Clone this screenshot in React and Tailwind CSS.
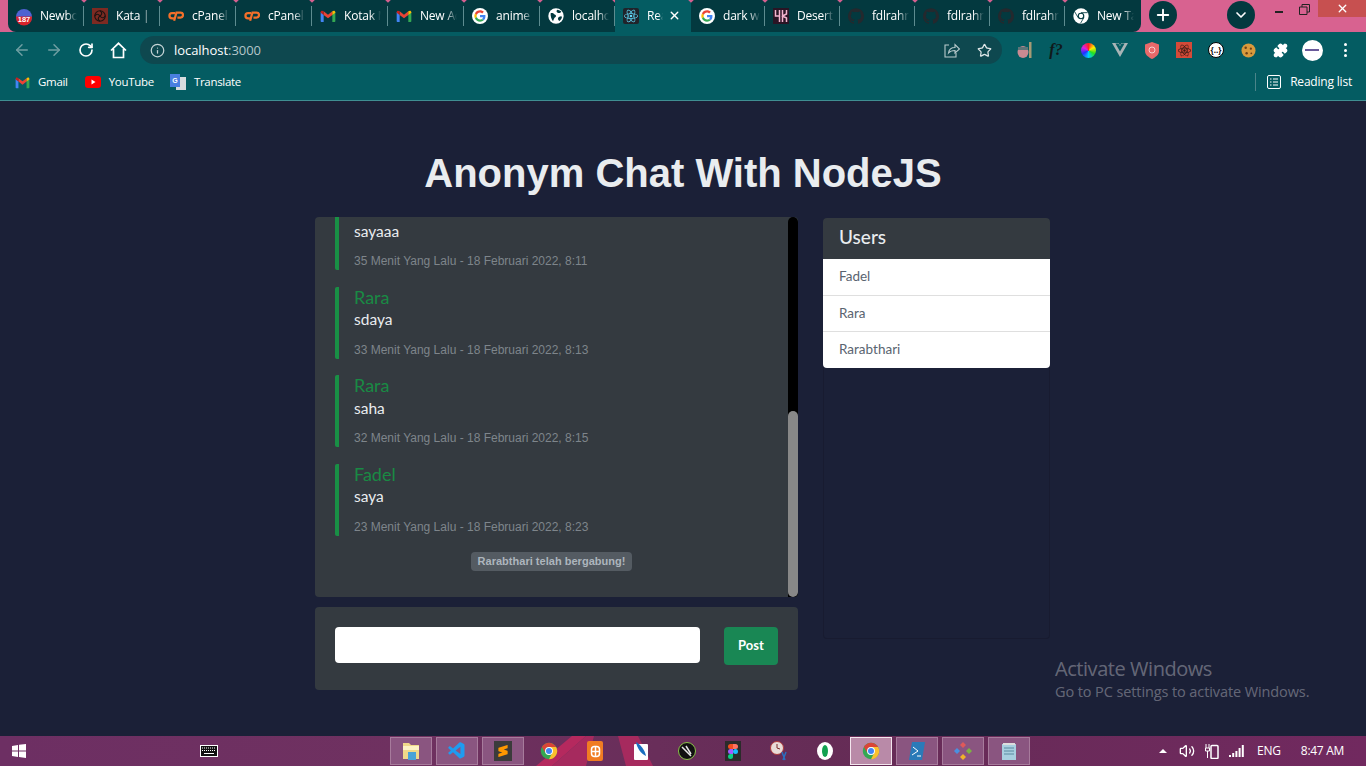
import React from "react";
import { ArrowLeft, ArrowRight, RotateCw, Info, Star, Puzzle, Plus, ChevronDown, X, Volume2 } from "lucide-react";
import { SiGithub, SiReact, SiVuedotjs, SiSublimetext } from "react-icons/si";
import { VscVscode } from "react-icons/vsc";

const G = ({ s = 16 }) => (
  <svg width={s} height={s} viewBox="0 0 48 48">
    <circle cx="24" cy="24" r="24" fill="#fff" />
    <g transform="translate(7 7) scale(.71)">
      <path fill="#EA4335" d="M24 9.5c3.5 0 6.700 1.300 9.100 3.500l6.800-6.800C35.800 2.400 30.300 0 24 0 14.600 0 6.500 5.400 2.600 13.200l7.900 6.200C12.400 13.600 17.700 9.500 24 9.500z" />
      <path fill="#4285F4" d="M46.900 24.500c0-1.600-.1-3.100-.4-4.500H24v9h12.900c-.6 3-2.200 5.500-4.700 7.200l7.700 6c4.500-4.200 7-10.300 7-17.700z" />
      <path fill="#FBBC05" d="M10.500 28.600c-.5-1.400-.8-3-.8-4.600s.3-3.200.8-4.600l-7.900-6.200C.9 16.500 0 20.100 0 24s.9 7.500 2.600 10.800l7.900-6.200z" />
      <path fill="#34A853" d="M24 48c6.500 0 11.900-2.100 15.900-5.800l-7.700-6c-2.200 1.400-4.900 2.300-8.200 2.300-6.300 0-11.600-4.200-13.500-9.900l-7.900 6.200C6.500 42.600 14.600 48 24 48z" />
    </g>
  </svg>
);

const Gmail = ({ s = 16 }) => (
  <svg width={s} height={s} viewBox="0 0 24 24">
    <path fill="#4285F4" d="M1 6v14c0 .6.500 1 1 1h3.500V10z" />
    <path fill="#34A853" d="M23 6v14c0 .6-.500 1-1 1h-3.500V10z" />
    <path fill="#EA4335" d="M5.500 5 12 10l6.500-5v5.500L12 15.500l-6.500-5z" />
    <path fill="#C5221F" d="M1 6.500C1 4 3.500 3.500 5.500 5v5.500L1 7z" />
    <path fill="#FBBC04" d="M23 6.500C23 4 20.500 3.500 18.500 5v5.500L23 7z" />
  </svg>
);

const Chrome = ({ s = 20 }) => (
  <svg width={s} height={s} viewBox="0 0 48 48">
    <circle cx="24" cy="24" r="22" fill="#34A853" />
    <path fill="#FBC02D" d="M24 46A22 22 0 0 0 43 13H24l9 15z" />
    <path fill="#DB4437" d="M5 13a22 22 0 0 1 38 0H24c-5 0-8 3-9 6l-1 9z" />
    <circle cx="24" cy="24" r="10.500" fill="#fff" />
    <circle cx="24" cy="24" r="8" fill="#4285F4" />
  </svg>
);

const ChromeMono = ({ s = 16 }) => (
  <svg width={s} height={s} viewBox="0 0 48 48">
    <circle cx="24" cy="24" r="23" fill="#fff" />
    <circle cx="24" cy="24" r="10" fill="#03393f" />
    <circle cx="24" cy="24" r="6.500" fill="#fff" />
    <path d="M24 14h20M15.500 29 5.500 12M32.500 29 22.500 46" stroke="#03393f" strokeWidth="2.500" />
  </svg>
);

const Globe = () => (
  <svg width="16" height="16" viewBox="0 0 24 24">
    <circle cx="12" cy="12" r="11.500" fill="#fff" />
    <path fill="#03393f" d="M4 8c2-1 4 0 5 1s3 1 3 3-2 2-3 4-1 3-1.500 4C5 17 3.500 12 4 8zM14 2.500c2 0 5 1.500 6 3-1 1-2 2-3.500 2s-3-1-3.500-2 0-2 1-3zM17 13c2-1 3-1 4 0-.5 3-2 5-4 6.500-1-1-2-2-2-3.500s1-2.500 2-3z" />
  </svg>
);

const Newbo = () => (
  <svg width="16" height="18" viewBox="0 0 16 18" className="mt-[1px]">
    <circle cx="8" cy="9" r="8" fill="#4f63d2" />
    <path d="M0 9.500a8 8 0 0 0 16 0v-1H0z" fill="#d8232a" />
    <text x="8" y="14" textAnchor="middle" fontSize="7.500" fontWeight="700" fill="#fff" fontFamily="Liberation Sans">187</text>
  </svg>
);

const Kata = () => (
  <div className="w-4 h-4 bg-[#7d2a22] flex items-center justify-center">
    <svg width="14" height="14" viewBox="0 0 24 24" fill="none" stroke="#1d1412" strokeWidth="2">
      <circle cx="12" cy="12" r="9" />
      <path d="M12 3c4 3 4 6 0 9s-4 6 0 9M3 12c3-4 6-4 9 0s6 4 9 0" />
    </svg>
  </div>
);

const Desert = () => (
  <div className="w-4 h-4 bg-[#2a1424] flex items-center justify-center">
    <svg width="14" height="14" viewBox="0 0 14 14" fill="none" stroke="#f4b5cf" strokeWidth="1.500">
      <path d="M1.500 1v6h4M5.500 1v12M8.500 1v12M12.500 1v4l-4 2 4 2v4" />
    </svg>
  </div>
);

const Cp = () => (
  <svg width="17" height="12" viewBox="0 0 17 12" fill="none" stroke="#f4702a" strokeWidth="2.400">
    <path d="M7.500 3H4.300a2.700 2.700 0 0 0 0 5.500h2" />
    <path d="M6.500 11 9 2.300h4.300a2.600 2.600 0 0 1 0 5.300H10" />
  </svg>
);
const Gh = () => <SiGithub size={16} color="#24292e" />;
const ReactFav = () => (
  <div className="w-4 h-4 bg-[#20232a] rounded-[2px] flex items-center justify-center">
    <SiReact size={14} color="#61dafb" />
  </div>
);

const Figma = () => (
  <svg width="10" height="15" viewBox="0 0 10 15">
    <path d="M2.500 0H5v5H2.500a2.500 2.500 0 0 1 0-5z" fill="#f24e1e" />
    <path d="M5 0h2.500a2.500 2.500 0 0 1 0 5H5z" fill="#ff7262" />
    <path d="M2.500 5H5v5H2.500a2.500 2.500 0 0 1 0-5z" fill="#a259ff" />
    <circle cx="7.500" cy="7.500" r="2.500" fill="#1abcfe" />
    <path d="M2.500 10H5v2.500a2.500 2.500 0 1 1-2.500-2.500z" fill="#0acf83" />
  </svg>
);

const tabs = [
  { w: "w-[76px]", icon: <Newbo />, t: "Newbook" },
  { w: "w-[76px]", icon: <Kata />, t: "Kata | Chat" },
  { w: "w-[76px]", icon: <Cp />, t: "cPanel - Tools" },
  { w: "w-[76px]", icon: <Cp />, t: "cPanel - Tools" },
  { w: "w-[76px]", icon: <Gmail />, t: "Kotak Masuk" },
  { w: "w-[76px]", icon: <Gmail />, t: "New Account" },
  { w: "w-[76px]", icon: <G />, t: "anime list" },
  { w: "w-[75px]", icon: <Globe />, t: "localhost" },
  { w: "w-[76px]", icon: <ReactFav />, t: "React App", active: true },
  { w: "w-[74px]", icon: <G />, t: "dark web" },
  { w: "w-[75px]", icon: <Desert />, t: "Desert Song" },
  { w: "w-[75px]", icon: <Gh />, t: "fdlrahman" },
  { w: "w-[75px]", icon: <Gh />, t: "fdlrahman" },
  { w: "w-[75px]", icon: <Gh />, t: "fdlrahman" },
  { w: "w-[75px]", icon: <ChromeMono />, t: "New Tab" },
];

function Tab({ tab, last }) {
  return (
    <div className={`${tab.w} relative h-8 flex items-center pl-2 shrink-0 ${tab.active ? "bg-[#045c62]" : ""}`}>
      <div className="w-4 h-4 flex items-center justify-center shrink-0">{tab.icon}</div>
      <div className={`ml-2 overflow-hidden whitespace-nowrap text-white text-[12px] leading-4 tracking-[-0.2px] [mask-image:linear-gradient(to_right,black_70%,transparent)] ${tab.active ? "w-[16px]" : "w-[37px]"}`}>
        {tab.t}
      </div>
      {tab.active && <X size={13} strokeWidth={2.5} className="absolute right-[10px] top-[9px] text-white" />}
      {!tab.active && !last && <div className="absolute right-0 top-[6px] h-5 w-px bg-[#5d8c90]" />}
      {!last && <div className="absolute -right-[1.5px] -top-[2px] w-1 h-1 rotate-45 bg-[#d76090]" />}
    </div>
  );
}

function TabStrip() {
  return (
    <div className="h-8 flex bg-[#d86290] shrink-0">
      <div className="ml-2 flex bg-[#03393f] rounded-bl-lg rounded-br-lg pr-[1px]">
        {tabs.map((t, i) => <Tab key={i} tab={t} last={i === tabs.length - 1} />)}
      </div>
      <div className="ml-2 mt-[1px] w-7 h-7 rounded-full bg-[#03393f] flex items-center justify-center">
        <Plus size={18} strokeWidth={2.5} className="text-white" />
      </div>
      <div className="ml-[50px] mt-[1px] w-7 h-7 rounded-full bg-[#03393f] flex items-center justify-center">
        <ChevronDown size={16} strokeWidth={2.5} className="text-white" />
      </div>
      <div className="ml-auto flex h-[17px]">
        <div className="w-[26px] flex items-center justify-center pt-[3px]"><div className="w-2 h-[2px] bg-[#222] mt-[4px]" /></div>
        <div className="w-[26px] flex items-center justify-center pr-[2px]">
          <svg width="11" height="11" viewBox="0 0 11 11" fill="none" stroke="#222" className="mt-[1px]"><path d="M.5 3h7.500v7.500H.5zM3 3V.5h7.500V8H8" /></svg>
        </div>
        <div className="w-[48px] bg-[#c75050] flex items-center justify-center">
          <X size={13} strokeWidth={2.5} className="text-white" />
        </div>
      </div>
    </div>
  );
}

const Ext = ({ children, w = "w-8" }) => <div className={`${w} h-8 flex items-center justify-center shrink-0`}>{children}</div>;

function Toolbar() {
  return (
    <div className="h-9 flex items-center bg-[#045c62] pl-[6px] shrink-0">
      <Ext><ArrowLeft size={18} className="text-[#6f9ea2]" /></Ext>
      <Ext><ArrowRight size={18} className="text-[#6f9ea2]" /></Ext>
      <Ext><RotateCw size={16} strokeWidth={2.5} className="text-white" /></Ext>
      <Ext>
        <svg width="17" height="17" viewBox="0 0 17 17" fill="none" stroke="#fff" strokeWidth="1.700" strokeLinejoin="miter"><path d="M1 8.500 8.500 1.300 16 8.500M3.500 7v8.500h10V7" /></svg>
      </Ext>
      <div className="ml-[6px] w-[862px] h-7 rounded-full bg-[#0e484f] flex items-center pl-[10px] pr-[2px] shrink-0">
        <Info size={15} className="text-[#c5d4d6]" />
        <span className="ml-[9px] mt-[2px] text-[13px] text-white font-['Open_Sans'] tracking-[-0.05px]">localhost<span className="text-[#b3c6c9]">:3000</span></span>
        <div className="ml-auto flex">
          <Ext>
            <svg width="16" height="15" viewBox="0 0 16 15" fill="none" stroke="#b9cbcd" strokeWidth="1.100"><path d="M5 2H1v12h11v-4" /><path d="M4.500 10c.5-3.500 3-5.500 6.500-5.500V1.500l4.500 4.500L11 10V7.500c-2.500 0-5 .8-6.500 2.500z" /></svg>
          </Ext>
          <Ext><Star size={15} className="text-[#dfe7e8]" /></Ext>
        </div>
      </div>
      <div className="ml-[6px] flex">
        <Ext>
          <svg width="16" height="18" viewBox="0 0 16 18"><ellipse cx="7" cy="11" rx="5.500" ry="6" fill="#c98a92" /><path d="M2 6h10v3H2z" fill="#5e7478" /><rect x="13" y="1" width="2.500" height="16" fill="#a59a74" /></svg>
        </Ext>
        <Ext><span className="font-['Liberation_Serif'] italic font-bold text-[16px] text-[#10191a]">f?</span></Ext>
        <Ext><div className="w-[15px] h-[15px] rounded-full bg-[conic-gradient(#ff2020,#ffee00,#20e020,#00d0ff,#2030ff,#e020e0,#ff2020)]" /></Ext>
        <Ext><SiVuedotjs size={16} color="#a9b4b6" /></Ext>
        <Ext>
          <svg width="16" height="17" viewBox="0 0 16 17"><path d="M8 0l7 2.500V9c0 4-4 6.500-7 8-3-1.500-7-4-7-8V2.500z" fill="#e8696a" /><circle cx="8" cy="8" r="3" fill="none" stroke="#f7d0d0" /></svg>
        </Ext>
        <Ext><div className="w-4 h-4 bg-[#d64a38] flex items-center justify-center"><SiReact size={13} color="#3a1a14" /></div></Ext>
        <Ext><div className="w-4 h-4 rounded-full bg-white border border-black flex items-center justify-center text-[8px] leading-none font-bold text-black">{"{..}"}</div></Ext>
        <Ext>
          <svg width="15" height="15" viewBox="0 0 16 16"><circle cx="8" cy="8" r="7.500" fill="#d99a3c" /><circle cx="5" cy="5" r="1.300" fill="#6e4016" /><circle cx="10.500" cy="6" r="1.200" fill="#6e4016" /><circle cx="6" cy="11" r="1.300" fill="#6e4016" /><circle cx="11" cy="11" r="1" fill="#6e4016" /></svg>
        </Ext>
        <Ext><Puzzle size={15} fill="#fff" className="text-white" /></Ext>
        <Ext>
          <div className="w-[21px] h-[21px] rounded-full bg-white flex items-center justify-center">
            <div className="w-[14px] h-[2px] bg-[#6a5a9a]" />
          </div>
        </Ext>
        <Ext w="w-[34px]">
          <div className="flex flex-col gap-[2.5px]">
            <div className="w-[3px] h-[3px] rounded-full bg-white" />
            <div className="w-[3px] h-[3px] rounded-full bg-white" />
            <div className="w-[3px] h-[3px] rounded-full bg-white" />
          </div>
        </Ext>
      </div>
    </div>
  );
}

function Bookmarks() {
  return (
    <div className="h-[33px] flex items-center bg-[#045c62] border-b border-[#3f8e92] text-white text-[12px] font-['Open_Sans'] pb-[4px] pl-[15px] shrink-0">
      <Gmail s={15} />
      <span className="ml-2 text-[11.5px] tracking-[-0.3px]">Gmail</span>
      <svg width="16" height="12" viewBox="0 0 16 12" className="ml-[17px]"><rect width="16" height="12" rx="3" fill="#f00" /><path d="M6.500 3.500v5l4-2.500z" fill="#fff" /></svg>
      <span className="ml-2 text-[11.5px] tracking-[-0.3px]">YouTube</span>
      <svg width="16" height="17" viewBox="0 0 16 17" className="ml-4"><rect x="6" y="3" width="10" height="13" fill="#d8dcde" /><path d="M0 0h10v13H0z" fill="#4a7fe0" /><text x="5" y="9" textAnchor="middle" fontSize="7" fontWeight="700" fill="#fff" fontFamily="Liberation Sans">G</text></svg>
      <span className="ml-2 text-[11.5px] tracking-[-0.3px]">Translate</span>
      <div className="ml-auto h-[18px] w-px bg-[#4b8489]" />
      <svg width="14" height="14" viewBox="0 0 14 14" fill="none" stroke="#fff" className="ml-[11px]"><rect x=".5" y=".5" width="13" height="13" rx="1.500" /><path d="M3 4h1.500M6 4h5M3 7h1.500M6 7h5M3 10h1.500M6 10h5" /></svg>
      <span className="ml-[9px] mr-[14px] tracking-[-0.2px]">Reading list</span>
    </div>
  );
}

const messages = [
  { n: "Fadel", b: "sayaaa", t: "35 Menit Yang Lalu - 18 Februari 2022, 8:11" },
  { n: "Rara", b: "sdaya", t: "33 Menit Yang Lalu - 18 Februari 2022, 8:13" },
  { n: "Rara", b: "saha", t: "32 Menit Yang Lalu - 18 Februari 2022, 8:15" },
  { n: "Fadel", b: "saya", t: "23 Menit Yang Lalu - 18 Februari 2022, 8:23" },
];

function Message({ m }) {
  return (
    <div className="h-[72px] shrink-0 border-l-4 border-[#198f45] rounded-l-[2px] pl-[15px] flex flex-col font-['Lato']">
      <div className="h-5 text-[18px] leading-5 text-[#198a44]">{m.n}</div>
      <div className="mt-[0.5px] h-[24px] text-[15.5px] leading-[24px] text-[#e9ecef]">{m.b}</div>
      <div className="mt-[10.5px] h-4 text-[12px] leading-4 text-[#7e858b] font-['Liberation_Sans']">{m.t}</div>
    </div>
  );
}

function Main() {
  return (
    <main className="flex-1 min-h-0 flex flex-col items-center bg-[#1b2037] relative">
      <h1 className="mt-[48px] h-[48px] text-[40px] leading-[48px] font-bold text-[#e9ecef] font-['Liberation_Sans']">Anonym Chat With NodeJS</h1>
      <div className="mt-[20px] w-[736px] flex gap-[25px] items-start">
        <div className="w-[483px] flex flex-col gap-[10px]">
          <div className="h-[380px] flex bg-[#343a40] rounded-[4px] overflow-hidden">
            <div className="flex-1 min-w-0 flex flex-col justify-end gap-[16.5px] pl-5 pb-[26px]">
              {messages.map((m, i) => <Message key={i} m={m} />)}
              <div className="self-center ml-[-20px] h-[19px] px-[7px] rounded-[4px] bg-[#545b62] text-[#adb5bd] text-[11px] leading-[19px] font-bold tracking-[0.02px] font-['Liberation_Sans']">Rarabthari telah bergabung!</div>
            </div>
            <div className="w-[10px] shrink-0 flex flex-col bg-black rounded-t-[5px]">
              <div className="h-[194px]" />
              <div className="flex-1 rounded-[5px] bg-[#888]" />
            </div>
          </div>
          <div className="h-[83px] bg-[#343a40] rounded-[4px] flex items-start pl-5 pr-5 pt-5">
            <div className="w-[365px] h-9 rounded-[4px] bg-white" />
            <button className="ml-auto w-[54px] h-[38px] rounded-[4px] bg-[#198754] text-white text-[13px] font-bold font-['Lato']">Post</button>
          </div>
        </div>
        <div className="w-[227px] h-[421px] mt-[1px] rounded-[4px] border border-[#181b30] border-t-0 flex flex-col font-['Lato']">
          <div className="h-[41px] -mx-px rounded-t-[4px] bg-[#343a40] flex items-center pl-4 pb-[3px] text-[19px] font-medium text-[#e9ecef]">Users</div>
          <div className="-mx-px bg-white rounded-b-[4px] text-[13.5px] text-[#5a6470]">
            <div className="h-[37px] pl-4 pb-[2px] flex items-center border-b border-[#dfdfdf]">Fadel</div>
            <div className="h-[36px] pl-4 flex items-center border-b border-[#dfdfdf]">Rara</div>
            <div className="h-[36px] pl-4 pb-[1px] flex items-center">Rarabthari</div>
          </div>
        </div>
      </div>
      <div className="absolute left-[1055px] top-[556px] text-[#ffffff55] font-['Open_Sans']">
        <div className="text-[20px] leading-[24px] tracking-[-0.45px]">Activate Windows</div>
        <div className="text-[14.5px] leading-[22px] tracking-[-0.1px]">Go to PC settings to activate Windows.</div>
      </div>
    </main>
  );
}

const TaskBtn = ({ children, on, active }) => (
  <div className={`w-[42px] h-[28px] shrink-0 flex items-center justify-center border ${active ? "border-[#f3e6ee] bg-[#b98aa8]" : on ? "border-[#a77b9c] bg-[#8a5580]" : "border-transparent"}`}>
    {children}
  </div>
);

function Taskbar() {
  return (
    <footer className="h-[30px] shrink-0 relative flex items-center bg-[linear-gradient(90deg,#6d2f63_0%,#6f3160_30%,#652c56_60%,#71295f_100%)] text-white overflow-hidden">
      <svg className="absolute left-[530px] top-0 pointer-events-none" width="130" height="30" viewBox="0 0 130 30">
        <path d="M6 30 42 0h14L22 30z" fill="#b5295e" />
        <path d="M22 30 56 0h8l-8 30z" fill="#a62a5e" />
        <path d="M88 0h20l15 30H96z" fill="#a62a5e" />
      </svg>
      <svg width="14" height="14" viewBox="0 0 14 14" fill="#fff" className="ml-[12px] relative"><path d="M0 2l6-1v5.500H0zM7 .8 14 0v6.500H7zM0 7.500h6V13l-6-1zM7 7.500h7V14l-7-1z" /></svg>
      <svg width="18" height="12" viewBox="0 0 18 12" className="ml-[174px] relative"><rect x=".5" y=".5" width="17" height="11" fill="#111" stroke="#fff" /><path d="M2 3h14M2 5.500h14" stroke="#fff" strokeDasharray="1 1" /><path d="M4 8.500h10" stroke="#fff" /></svg>
      <div className="ml-[172px] flex gap-1 relative">
        <TaskBtn on>
          <svg width="18" height="20" viewBox="0 0 18 20"><path d="M1 2h6l2 2h8v14H1z" fill="#f0d98a" /><path d="M1 5h16v4H1z" fill="#fdf3c4" /><rect x="6" y="11" width="8" height="8" fill="#4aa3d8" /></svg>
        </TaskBtn>
        <TaskBtn on><VscVscode size={20} color="#1f9cf0" /></TaskBtn>
        <TaskBtn on><div className="w-[18px] h-[20px] bg-[#3b3b3b] flex items-center justify-center"><SiSublimetext size={12} color="#ff9800" /></div></TaskBtn>
        <TaskBtn><Chrome s={18} /></TaskBtn>
        <TaskBtn>
          <div className="w-[16px] h-[20px] bg-[#f07c22] rounded-[2px] flex items-center justify-center">
            <svg width="11" height="13" viewBox="0 0 11 13" fill="none" stroke="#fff" strokeWidth="1.500"><rect x="1.500" y="1.500" width="8" height="10" rx="3" /><path d="M1 6.500h9M5.500 1v11" /></svg>
          </div>
        </TaskBtn>
        <TaskBtn>
          <svg width="14" height="18" viewBox="0 0 14 18"><rect y="2" width="14" height="16" rx="1" fill="#fff" /><path d="M2 0c4 2 9 8 10 14C7 12 3 6 2 0z" fill="#1a6fc0" /></svg>
        </TaskBtn>
        <TaskBtn>
          <svg width="18" height="18" viewBox="0 0 18 18"><circle cx="9" cy="9" r="8.500" fill="#101010" stroke="#8bc34a" strokeWidth="1" /><path d="M4 5l9 9M8 4l5 8" stroke="#e6e6e6" strokeWidth="1.500" /></svg>
        </TaskBtn>
        <TaskBtn><div className="w-[16px] h-[20px] bg-[#2b2b2b] flex items-center justify-center"><Figma /></div></TaskBtn>
        <TaskBtn>
          <svg width="20" height="20" viewBox="0 0 20 20"><circle cx="8" cy="7" r="6.500" fill="#e8dcd8" stroke="#b03a3a" /><path d="M8 3v4l3 1" stroke="#7a2a2a" fill="none" /><path d="M13 11l3 8M17 11l-3 8" stroke="#2a70c0" strokeWidth="1.500" /></svg>
        </TaskBtn>
        <TaskBtn>
          <svg width="16" height="18" viewBox="0 0 16 18"><ellipse cx="8" cy="9" rx="8" ry="9" fill="#fff" /><ellipse cx="8" cy="9" rx="3" ry="6" fill="#12a150" /></svg>
        </TaskBtn>
        <TaskBtn active><Chrome s={18} /></TaskBtn>
        <TaskBtn on>
          <svg width="16" height="18" viewBox="0 0 16 18"><path d="M3 0h13l-3 18H0z" fill="#2a7ab8" /><path d="M4 5l5 4-6 4M8 14h4" stroke="#fff" fill="none" /></svg>
        </TaskBtn>
        <TaskBtn on>
          <svg width="18" height="18" viewBox="0 0 18 18"><path d="M9 0l3 3-3 3-3-3z" fill="#e0595a" /><path d="M3 6l3 3-3 3-3-3z" fill="#4a90e0" /><path d="M15 6l3 3-3 3-3-3z" fill="#7cb342" /><path d="M9 12l3 3-3 3-3-3z" fill="#f0b429" /></svg>
        </TaskBtn>
        <TaskBtn on>
          <svg width="14" height="18" viewBox="0 0 14 18"><rect y="2" width="14" height="16" fill="#a8cfe0" /><path d="M2 6h10M2 9h10M2 12h10" stroke="#5a8aa0" /><path d="M1 1h12v2H1z" fill="#ddd" /></svg>
        </TaskBtn>
      </div>
      <div className="ml-[129px] relative w-0 h-0 border-l-[4px] border-r-[4px] border-b-[4px] border-l-transparent border-r-transparent border-b-white" />
      <Volume2 size={16} className="ml-[12px] relative" />
      <svg width="14" height="16" viewBox="0 0 14 16" fill="none" stroke="#fff" className="ml-[10px] relative"><rect x="6" y="2.500" width="7" height="13" rx="1" strokeWidth="1.500" /><path d="M1 1v4M4 1v4M.5 5h4v3h-4zM2.500 8v7" /></svg>
      <svg width="15" height="12" viewBox="0 0 15 12" fill="#fff" className="ml-[10px] relative"><path d="M0 10h2v2H0zM3.200 8h2v4h-2zM6.400 6h2v6h-2zM9.600 3h2v9h-2zM12.800 0h2v12h-2z" /></svg>
      <span className="ml-[13px] relative text-[12px] font-['Open_Sans'] tracking-[-0.2px]">ENG</span>
      <span className="ml-[20px] relative text-[12px] font-['Open_Sans'] tracking-[-0.3px]">8:47 AM</span>
    </footer>
  );
}

export default function App() {
  return (
    <div className="w-[1366px] h-[766px] flex flex-col overflow-hidden font-['Open_Sans',sans-serif]">
      <TabStrip />
      <Toolbar />
      <Bookmarks />
      <Main />
      <Taskbar />
    </div>
  );
}
